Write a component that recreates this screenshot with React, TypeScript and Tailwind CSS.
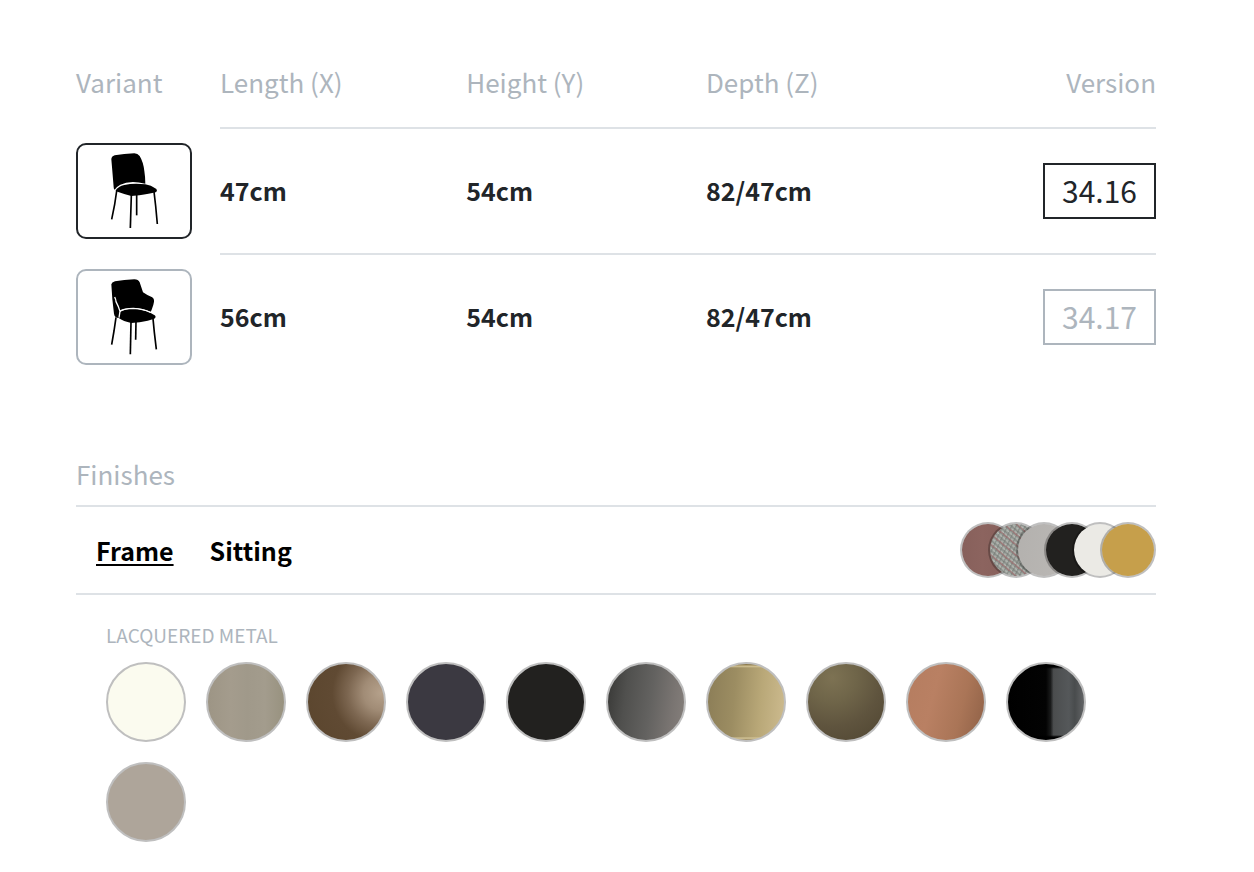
// ============================================================
// App.tsx — Product Dimensions and Finishes
// ============================================================
//
// PURPOSE:
// ============================================================

import React from 'react';

// ── Types ─────────────────────────────────────────────────

interface Variant {
  version: string;
  length: string;
  height: string;
  depth: string;
  label: string;
  icon: React.ReactNode;
}

interface Finish {
  name: string;
  /** Tailwind background classes for the material */
  fill: string;
}

// ── Drawings ──────────────────────────────────────────────

/** Side chair silhouette */
function ChairIcon() {
  return (
    <svg viewBox="24 27 336 276" className="h-full w-full" aria-hidden="true">
      <path d="M124 70 Q124 61 134 58 Q162 53 193 52 Q203 52 209 60 Q220 78 223 105 Q226 124 226 143 Q180 132 151 146 Q141 151 134 161 Q131 160 131 154 L127 105 Z" />
      <path d="M137 163 Q145 151 163 147 Q190 141 226 145 Q243 148 258 158 Q264 164 257 169 Q238 173 208 178 L184 180 Q157 173 138 166 Z" />
      <g fill="none" stroke="#000" strokeWidth="5">
        <path d="M140 165 L134 205 L125 250" />
        <path d="M184 177 L181 276" />
        <path d="M200 176 L200 238" />
        <path d="M252 167 L257 210 L262 264" />
      </g>
    </svg>
  );
}

/** Armchair silhouette */
function ArmchairIcon() {
  return (
    <svg viewBox="24 27 336 276" className="h-full w-full" aria-hidden="true">
      <path d="M124 67 Q125 61 135 58 Q162 53 193 52 Q205 52 209 61 L219 91 Q230 99 245 105 Q253 108 252 119 Q251 128 245 143 L242 150 Q218 138 190 138 Q163 138 150 147 L147 168 Q134 168 132 155 L127 112 Z" />
      <path d="M149 151 Q160 141 190 140 Q218 141 242 153 L254 160 Q260 165 253 170 Q235 176 209 181 L184 183 Q160 178 146 168 Z" />
      <path d="M134 105 Q138 113 138 119 Q145 132 150 148 L147 167" fill="none" stroke="#fff" strokeWidth="4" />
      <path d="M150 147 Q163 139 190 139 Q218 140 242 151" fill="none" stroke="#fff" strokeWidth="4" />
      <g fill="none" stroke="#000" strokeWidth="5">
        <path d="M138 166 L132 207 L125 248" />
        <path d="M183 180 L181 277" />
        <path d="M198 178 L197 233" />
        <path d="M249 170 L253 211 L259 262" />
      </g>
    </svg>
  );
}

// ── Data ──────────────────────────────────────────────────

const VARIANTS: Variant[] = [
  { version: '34.16', length: '47cm', height: '54cm', depth: '82/47cm', label: 'Chair', icon: <ChairIcon /> },
  { version: '34.17', length: '56cm', height: '54cm', depth: '82/47cm', label: 'Armchair', icon: <ArmchairIcon /> },
];

const PARTS = ['Frame', 'Sitting'];

const PREVIEW: Finish[] = [
  { name: 'Rose wood', fill: 'bg-[linear-gradient(90deg,#87605b,#8c645f_40%,#865f5a)]' },
  {
    name: 'Tweed',
    fill: 'bg-[repeating-linear-gradient(40deg,#a06c6ebb_0px,#a06c6e88_1px,transparent_2px,transparent_8px),repeating-linear-gradient(115deg,#6f746f88_0px,#6f746f66_1px,transparent_2px,transparent_4px),repeating-linear-gradient(40deg,#888d88_0px,#b4b8b2_2px,#888d88_4px)]',
  },
  { name: 'Concrete', fill: 'bg-[linear-gradient(100deg,#b3b1ae,#bbb8b5)]' },
  { name: 'Black', fill: 'bg-[#22211f]' },
  { name: 'White leather', fill: 'bg-[#ebeae5]' },
  { name: 'Mustard', fill: 'bg-[#c69f4b]' },
];

const LACQUERED: Finish[] = [
  { name: 'White', fill: 'bg-[#fbfbef]' },
  { name: 'Sand', fill: 'bg-[linear-gradient(90deg,#9d9585,#a49c8d_30%,#a0998a_52%,#a39c8d_75%,#98927f)]' },
  { name: 'Bronze', fill: 'bg-[radial-gradient(circle_at_96%_38%,#b5a18b_0%,#a18c76_20%,#7d6751_38%,#604a33_56%,#5a452d_100%)]' },
  { name: 'Night blue', fill: 'bg-[#3b3941]' },
  { name: 'Black', fill: 'bg-[#22211f]' },
  { name: 'Gunmetal', fill: 'bg-[linear-gradient(98deg,#373735_0%,#50504e_25%,#636260_55%,#7a7572_82%,#86807c_100%)]' },
  {
    name: 'Champagne',
    fill: 'bg-[linear-gradient(180deg,#8d7b4d_0px,#8d7b4d_1px,#d7c798_2px,transparent_4px,transparent_73px,#d9cb9e_74px,#96845a_76px),linear-gradient(95deg,#8b7d57_0%,#9c8d62_35%,#b9a878_68%,#cdbb8f_100%)]',
  },
  { name: 'Antique brass', fill: 'bg-[radial-gradient(circle_at_32%_18%,#7d7253_0%,#6f6549_30%,#5f543e_60%,#4f4531_100%)]' },
  { name: 'Copper', fill: 'bg-[linear-gradient(105deg,#b57d60_0%,#b98063_35%,#aa7557_68%,#8e6046_100%)]' },
  {
    name: 'Glossy black',
    fill: 'bg-[linear-gradient(180deg,#000_0px,#000_3px,transparent_5px,transparent_71px,#000_73px),linear-gradient(90deg,#000_0%,#030303_50%,#1a1b1b_56%,#4b4d4e_60%,#55585a_80%,#494c4d_88%,#626466_100%)]',
  },
  { name: 'Taupe', fill: 'bg-[#aea59a]' },
];

// ── Variant table ─────────────────────────────────────────

/**
 * VariantTable
 * One row for each variant. The selected one is drawn dark.
 */
function VariantTable({ selected, onSelect }: { selected: string; onSelect: (version: string) => void }) {
  return (
    <table className="w-full table-fixed border-separate border-spacing-0 text-left">
      <thead className="text-[#adb5bd]">
        <tr>
          <th className="w-36 pt-[62px] pb-[25px] font-normal">Variant</th>
          <th className="w-[22.8%] pt-[62px] pb-[25px] font-normal">Length (X)</th>
          <th className="w-[22.2%] pt-[62px] pb-[25px] font-normal">Height (Y)</th>
          <th className="pt-[62px] pb-[25px] font-normal">Depth (Z)</th>
          <th className="pt-[62px] pb-[25px] text-right font-normal">Version</th>
        </tr>
      </thead>
      <tbody>
        {VARIANTS.map((v) => {
          const active = v.version === selected;
          const tone = active ? 'border-[#212529] text-[#212529]' : 'border-[#adb5bd] text-[#adb5bd]';
          return (
            <tr key={v.version} className="text-[25px] font-bold">
              <td className="pt-4 pb-3.5">
                <button
                  type="button"
                  aria-label={v.label}
                  aria-pressed={active}
                  onClick={() => onSelect(v.version)}
                  className={`block h-24 w-29 cursor-pointer rounded-[10px] border-2 ${tone}`}
                >
                  {v.icon}
                </button>
              </td>
              <td className="border-t-2 border-[#dee2e6] pb-0.5">{v.length}</td>
              <td className="border-t-2 border-[#dee2e6] pb-0.5">{v.height}</td>
              <td className="border-t-2 border-[#dee2e6] pb-0.5">{v.depth}</td>
              <td className="border-t-2 border-[#dee2e6] text-right">
                <button
                  type="button"
                  onClick={() => onSelect(v.version)}
                  className={`h-14 cursor-pointer border-2 px-[17px] pb-0.5 align-middle text-[30px] leading-none font-normal ${tone}`}
                >
                  {v.version}
                </button>
              </td>
            </tr>
          );
        })}
      </tbody>
    </table>
  );
}

// ── Finishes ──────────────────────────────────────────────

function Finishes() {
  const [part, setPart] = React.useState('Frame');

  return (
    <section className="mt-[75px]">
      <h2 className="border-b-2 border-[#dee2e6] pb-[11px] text-[#adb5bd]">Finishes</h2>

      <div className="flex items-center justify-between border-b-2 border-[#dee2e6] py-[15px] pl-5">
        <div className="flex gap-9 text-[25px] font-bold text-black">
          {PARTS.map((p) => (
            <button
              key={p}
              type="button"
              onClick={() => setPart(p)}
              className={`cursor-pointer decoration-2 underline-offset-3 ${p === part ? 'underline' : ''}`}
            >
              {p}
            </button>
          ))}
        </div>
        <div className="flex -space-x-7">
          {PREVIEW.map((f) => (
            <span key={f.name} title={f.name} className={`size-14 rounded-full border-2 border-black/25 bg-clip-padding ${f.fill}`} />
          ))}
        </div>
      </div>

      <div className="pt-[26px] pb-8 pl-[30px]">
        <h3 className="mb-[13px] text-[19px] leading-7 text-[#adb5bd] uppercase">Lacquered metal</h3>
        <div className="flex flex-wrap gap-5">
          {LACQUERED.map((f) => (
            <button
              key={f.name}
              type="button"
              aria-label={f.name}
              className={`size-20 cursor-pointer rounded-full border-2 border-[#bfbfbf] ${f.fill}`}
            />
          ))}
        </div>
      </div>
    </section>
  );
}

export default function App() {
  const [selected, setSelected] = React.useState('34.16');

  return (
    <main className="bg-white pr-[98px] pl-[76px] font-['Noto_Sans_CJK_SC','Noto_Sans',sans-serif] text-[26px] leading-10 text-[#212529]">
      <VariantTable selected={selected} onSelect={setSelected} />
      <Finishes />
    </main>
  );
}
